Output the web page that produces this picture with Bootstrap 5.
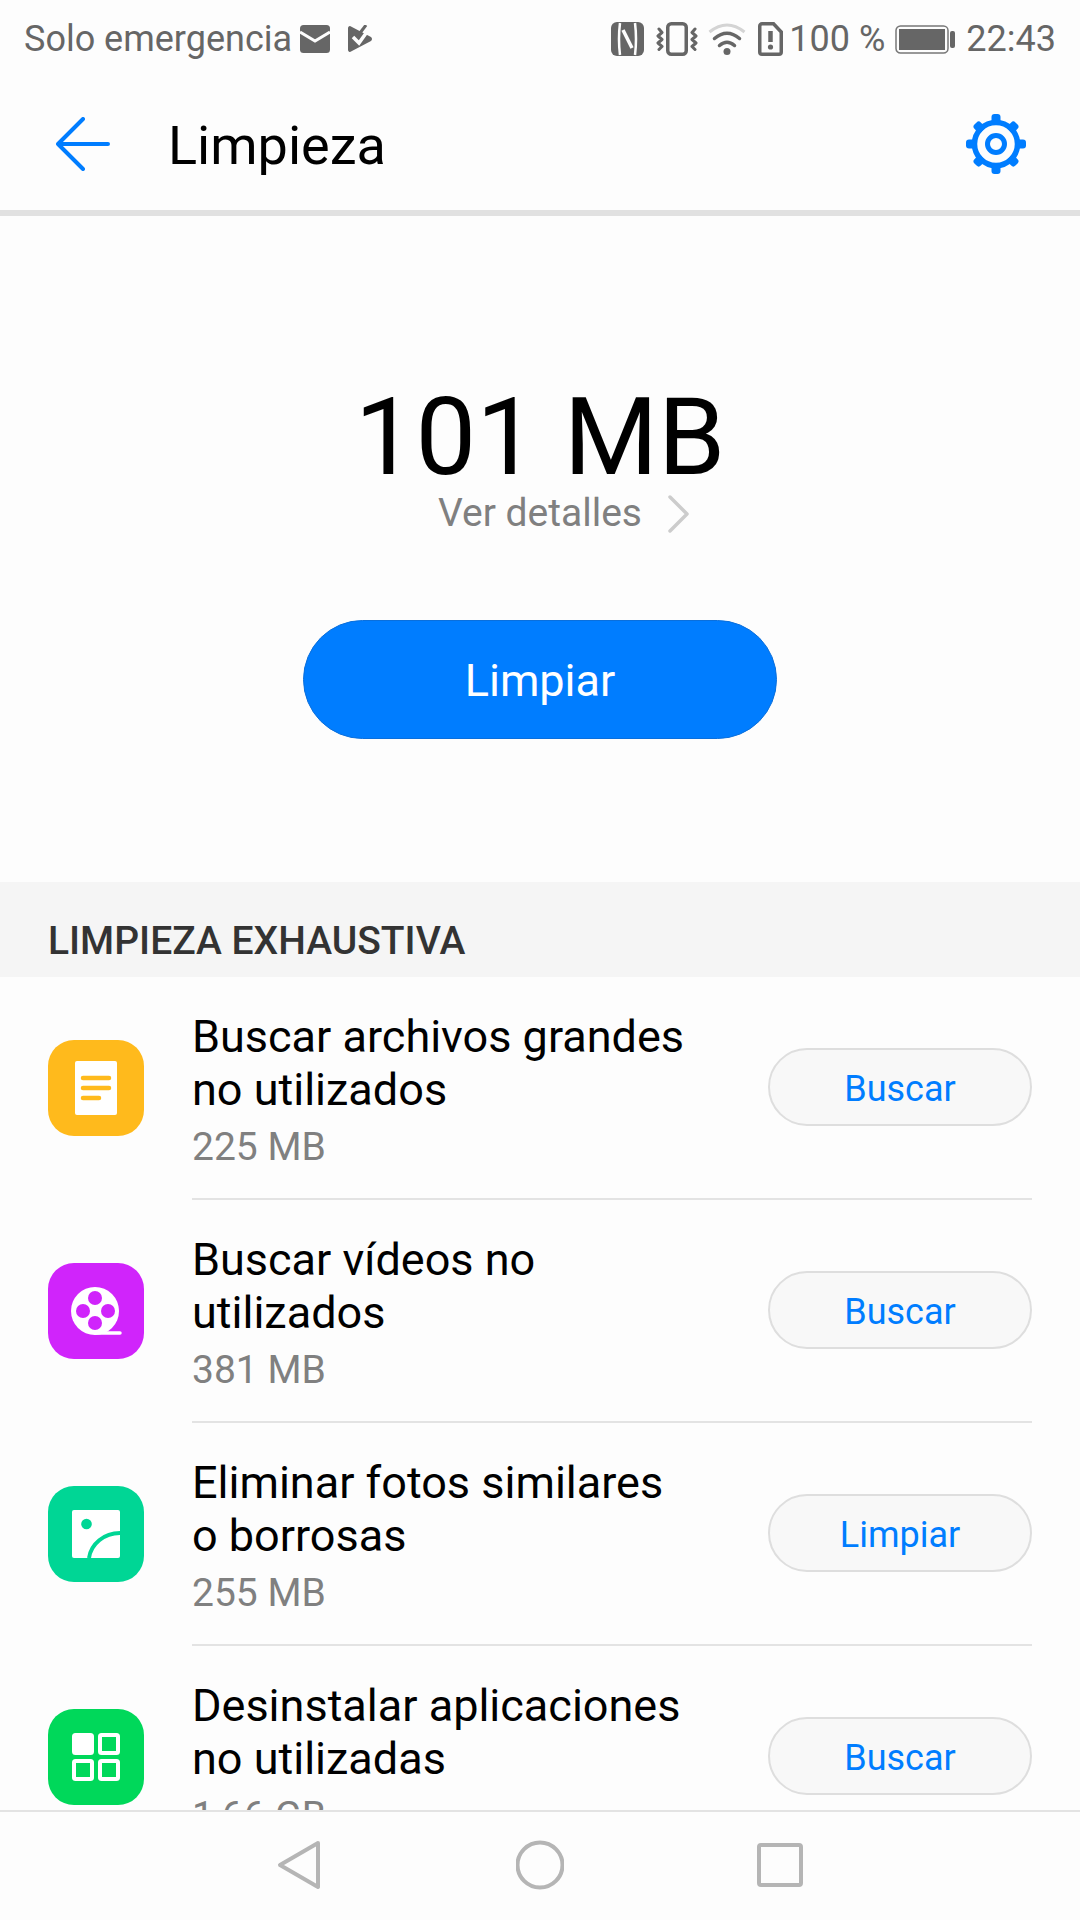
<!DOCTYPE html>
<html lang="es">
<head>
<meta charset="utf-8">
<title>Limpieza</title>
<link rel="stylesheet" href="https://cdn.jsdelivr.net/npm/bootstrap@5.3.0/dist/css/bootstrap.min.css">
<style>
html,body{margin:0;height:1920px;overflow:hidden;background:#fdfdfd;font-family:Roboto,"Liberation Sans",sans-serif}
.phone{height:1920px;width:1080px;background:#fdfdfd}
.sbar{height:72px;flex:none;padding:6px 24px 0;color:#666;font-size:36px;line-height:1}
.sbar svg{display:block;flex:none}
.tbar{height:138px;flex:none;padding:6px 54px 0 56px}
.tbar-title{font-size:54px;color:#000;margin:3px 0 0 58px;line-height:1}
.tbar-rule{height:6px;background:#e1e1e1;flex:none}
.hero{height:666px;flex:none}
.hero-num{font-size:108px;line-height:1;color:#000;margin-top:167px}
.hero-link{font-size:39px;line-height:1;color:#808080;margin-top:3px;padding-left:48px;gap:26px}
.hero-btn{width:474px;height:119px;margin-top:87px;background:#007dff;border:1px solid #0a6fdc;border-radius:60px;color:#fff;font-size:45px;line-height:1;padding:1px 0 0}
.hero-btn:hover{background:#007dff;color:#fff}
.sect{height:95px;background:#f5f5f5;padding:0 48px;font-size:39px;font-weight:500;color:#333;line-height:118px;flex:none;overflow:hidden}
.scroller{overflow:hidden;min-height:0}
.item{height:223px;padding:0 48px}
.appicon{width:96px;height:96px;flex:none;margin-top:63px}
.body-wrap{margin-left:48px;height:223px;border-bottom:2px solid #e3e3e3;min-width:0}
.item:last-child .body-wrap{border-bottom:0}
.item-title{font-size:45px;line-height:53px;color:#000;margin-top:33px;width:500px}
.item-size{font-size:39px;line-height:42px;color:#808080;margin-top:10px}
.pillbtn{width:264px;height:78px;border-radius:39px;background:#f8f8f8;border:2px solid #dedede;color:#007dff;font-size:36px;line-height:1;padding:4px 0 0;margin-top:71px;flex:none}
.pillbtn:hover{background:#f8f8f8;color:#007dff;border-color:#dedede}
.navb{height:110px;border-top:2px solid #e3e3e3;padding-bottom:2px;background:#fdfdfd;flex:none;gap:192px}
</style>
</head>
<body>
<div class="phone d-flex flex-column">
  <div class="sbar d-flex align-items-center">
    <span>Solo emergencia</span>
    <svg class="ms-2" width="30" height="28" viewBox="0 0 30 28"><rect width="30" height="28" rx="3.500" fill="#666"/><path d="M0 7l15 9 15-9" fill="none" stroke="#fdfdfd" stroke-width="3"/></svg>
    <svg style="margin-left:18px" width="26" height="28" viewBox="0 0 26 28"><path fill="#666" d="M0 3a2 2 0 0 1 3-1.600L23 12a2.500 2.500 0 0 1 0 4L3 26.600a2 2 0 0 1-3-1.600z"/><path d="M5 12l6 6 10-14" fill="none" stroke="#fdfdfd" stroke-width="3.500"/><path d="M12 8l6-8" fill="none" stroke="#666" stroke-width="3"/></svg>
    <div class="ms-auto d-flex align-items-center">
      <svg width="33" height="34" viewBox="0 0 33 34"><rect width="33" height="34" rx="6" fill="#666"/><path d="M9 1Q7 17 9 33M24 1q2 16 0 32" fill="none" stroke="#fdfdfd" stroke-width="2.500"/><path d="M12 8l9 18" fill="none" stroke="#fdfdfd" stroke-width="3.500"/></svg>
      <svg style="margin-left:12px" width="42" height="34" viewBox="0 0 42 34"><rect x="11.750" y="1.750" width="18.500" height="30.500" rx="3.500" fill="none" stroke="#666" stroke-width="3.500"/><path d="M3 7l3 3.500-4 3.500 4 3.500-4 3.500 4 3.500-3 3M39 7l-3 3.500 4 3.500-4 3.500 4 3.500-4 3.500 3 3" fill="none" stroke="#666" stroke-width="3" stroke-linejoin="round" stroke-linecap="round"/></svg>
      <svg style="margin-left:10px" width="38" height="34" viewBox="0 0 38 34"><path d="M1.500 10Q19-4 36.500 10" fill="none" stroke="#d4d4d4" stroke-width="3"/><path d="M6.500 16.500Q19 6 31.500 16.500M11.500 23.500Q19 17 26.500 23.500" fill="none" stroke="#666" stroke-width="3.500" stroke-linecap="round"/><circle cx="19" cy="29.500" r="3.500" fill="#666"/></svg>
      <svg style="margin-left:12px" width="25" height="34" viewBox="0 0 25 34"><path d="M4 1.750h11.500L23.250 10v20a2.250 2.250 0 0 1-2.250 2.250H4A2.250 2.250 0 0 1 1.750 30V4A2.250 2.250 0 0 1 4 1.750z" fill="none" stroke="#666" stroke-width="3.500"/><path d="M12.500 9v11" stroke="#666" stroke-width="4.500"/><circle cx="12.500" cy="25" r="2.600" fill="#666"/></svg>
      <span style="margin-left:6px">100 %</span>
      <svg style="margin-left:10px" width="60" height="29" viewBox="0 0 60 29"><rect x="1" y="1" width="52" height="27" rx="4.500" fill="none" stroke="#777" stroke-width="1.500"/><rect x="4" y="4" width="46" height="21" fill="#666"/><rect x="55" y="6" width="5" height="17" rx="2" fill="#666"/></svg>
      <span style="margin-left:11px">22:43</span>
    </div>
  </div>

  <div class="tbar d-flex align-items-center">
    <svg width="54" height="54" viewBox="0 0 54 54"><path d="M27 2 2 27l25 25M2 27h50" fill="none" stroke="#007dff" stroke-width="4" stroke-linecap="round" stroke-linejoin="round"/></svg>
    <div class="tbar-title">Limpieza</div>
    <svg class="ms-auto" width="60" height="60" viewBox="0 0 60 60"><circle cx="30" cy="30" r="21.500" fill="none" stroke="#007dff" stroke-width="5.500"/><circle cx="30" cy="30" r="8.500" fill="none" stroke="#007dff" stroke-width="5"/><g fill="#007dff"><rect x="25.500" y="0" width="9" height="10" rx="3"/><rect x="25.500" y="50" width="9" height="10" rx="3"/><rect x="0" y="25.500" width="10" height="9" rx="3"/><rect x="50" y="25.500" width="10" height="9" rx="3"/><rect x="25.500" y="1" width="9" height="10" rx="3" transform="rotate(45 30 30)"/><rect x="25.500" y="49" width="9" height="10" rx="3" transform="rotate(45 30 30)"/><rect x="1" y="25.500" width="10" height="9" rx="3" transform="rotate(45 30 30)"/><rect x="49" y="25.500" width="10" height="9" rx="3" transform="rotate(45 30 30)"/></g></svg>
  </div>
  <div class="tbar-rule"></div>

  <div class="hero d-flex flex-column align-items-center">
    <div class="hero-num">101 MB</div>
    <div class="hero-link d-flex align-items-center"><span>Ver detalles</span>
      <svg width="22" height="38" viewBox="0 0 22 38"><path d="M2 2l17 17L2 36" fill="none" stroke="#ccc" stroke-width="3.500" stroke-linecap="round" stroke-linejoin="round"/></svg>
    </div>
    <button type="button" class="btn hero-btn">Limpiar</button>
  </div>

  <div class="sect">LIMPIEZA EXHAUSTIVA</div>

  <div class="scroller flex-grow-1">
    <div class="item d-flex">
      <svg class="appicon" viewBox="0 0 96 96"><rect width="96" height="96" rx="26" fill="#ffba1c"/><rect x="27" y="21" width="42" height="54" rx="2" fill="#fff"/><path d="M35 38h26M35 48h26M35 58h16" stroke="#ffba1c" stroke-width="4.500" stroke-linecap="round"/></svg>
      <div class="body-wrap d-flex flex-grow-1 justify-content-between">
        <div><div class="item-title">Buscar archivos grandes no utilizados</div><div class="item-size">225 MB</div></div>
        <button type="button" class="btn pillbtn">Buscar</button>
      </div>
    </div>
    <div class="item d-flex">
      <svg class="appicon" viewBox="0 0 96 96"><rect width="96" height="96" rx="26" fill="#d024fb"/><circle cx="47" cy="48" r="24" fill="#fff"/><path d="M47 70h25" stroke="#fff" stroke-width="3.500" stroke-linecap="round"/><g fill="#d024fb"><circle cx="47" cy="35" r="7"/><circle cx="47" cy="60" r="7"/><circle cx="35" cy="48" r="7"/><circle cx="60" cy="48" r="7"/></g></svg>
      <div class="body-wrap d-flex flex-grow-1 justify-content-between">
        <div><div class="item-title">Buscar vídeos no utilizados</div><div class="item-size">381 MB</div></div>
        <button type="button" class="btn pillbtn">Buscar</button>
      </div>
    </div>
    <div class="item d-flex">
      <svg class="appicon" viewBox="0 0 96 96"><rect width="96" height="96" rx="26" fill="#00d695"/><rect x="24" y="24" width="48" height="48" rx="2" fill="#fff"/><circle cx="38.500" cy="38" r="5.300" fill="#00d695"/><path d="M41 72c2-14 15-25 31-25" fill="none" stroke="#00d695" stroke-width="4"/></svg>
      <div class="body-wrap d-flex flex-grow-1 justify-content-between">
        <div><div class="item-title">Eliminar fotos similares o borrosas</div><div class="item-size">255 MB</div></div>
        <button type="button" class="btn pillbtn">Limpiar</button>
      </div>
    </div>
    <div class="item d-flex">
      <svg class="appicon" viewBox="0 0 96 96"><rect width="96" height="96" rx="26" fill="#00d85a"/><g fill="none" stroke="#fff" stroke-width="4"><rect x="26" y="26" width="18" height="18" rx="1.500" fill="#fff"/><rect x="52" y="26" width="18" height="18" rx="1.500"/><rect x="26" y="52" width="18" height="18" rx="1.500"/><rect x="52" y="52" width="18" height="18" rx="1.500"/></g></svg>
      <div class="body-wrap d-flex flex-grow-1 justify-content-between">
        <div><div class="item-title">Desinstalar aplicaciones no utilizadas</div><div class="item-size">1,66 GB</div></div>
        <button type="button" class="btn pillbtn">Buscar</button>
      </div>
    </div>
  </div>

  <div class="navb d-flex align-items-center justify-content-center">
    <svg width="48" height="50" viewBox="0 0 48 50"><path d="M42 3 4 25l38 22z" fill="none" stroke="#b5b5b5" stroke-width="4" stroke-linejoin="round"/></svg>
    <svg width="48" height="50" viewBox="0 0 48 50"><circle cx="24" cy="25" r="22.500" fill="none" stroke="#b5b5b5" stroke-width="4"/></svg>
    <svg width="48" height="50" viewBox="0 0 48 50"><rect x="3" y="5" width="42" height="40" rx="2" fill="none" stroke="#b5b5b5" stroke-width="4"/></svg>
  </div>
</div>
</body>
</html>
